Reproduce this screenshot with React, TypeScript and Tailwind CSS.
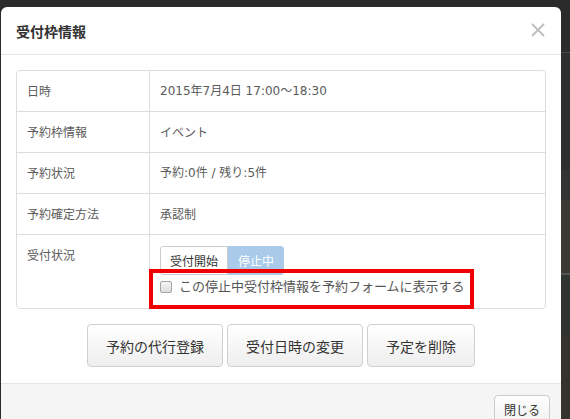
import React from "react";

function Row({ label, children, latin }: { label: string; children: React.ReactNode; latin?: boolean }) {
  return (
    <div className="flex border-t border-[#dddddd] first:border-t-0">
      <div className="w-[133px] shrink-0 border-r border-[#dddddd] px-[10px] py-[11px] text-[12px] leading-[18px] text-[#5a5a5a]">
        {label}
      </div>
      <div
        className={`flex-1 px-[10px] py-[11px] text-[12px] leading-[18px] text-[#5a5a5a] ${
          latin ? "font-['DejaVu_Sans','Noto_Sans_CJK_JP',sans-serif]" : ""
        }`}
      >
        {children}
      </div>
    </div>
  );
}

function ActionButton({ children }: { children: React.ReactNode }) {
  return (
    <button className="h-[43px] rounded-[4px] border border-[#d0d0d0] bg-gradient-to-b from-white to-[#eeeeee] px-[18px] text-[14px] leading-[20px] text-[#333]">
      {children}
    </button>
  );
}

export default function App() {
  return (
    <div className="flex h-[419px] w-[570px] overflow-hidden bg-[#2b2b2b] font-['Noto_Sans_CJK_JP','Noto_Sans',sans-serif]">
      <div className="w-[1px] shrink-0" />
      <div className="mt-[7px] flex w-[560px] shrink-0 flex-col self-start overflow-hidden rounded-[6px] bg-white">
        {/* header */}
        <div className="flex h-[48px] items-center justify-between border-b border-[#e5e5e5] pl-[15px] pr-[16px]">
          <div className="text-[14px] font-bold leading-[20px] text-[#333]">受付枠情報</div>
          <svg width="14" height="14" viewBox="0 0 14 14" className="mt-[-1px]">
            <path d="M1 1 L13 13 M13 1 L1 13" stroke="#bdbdbd" strokeWidth="1.8" />
          </svg>
        </div>
        {/* body */}
        <div className="flex flex-col px-[15px] pb-[16px] pt-[15px]">
          <div className="rounded-[4px] border border-[#dddddd]">
            <Row label="日時" latin>
              2015年7月4日 17:00～18:30
            </Row>
            <Row label="予約枠情報">イベント</Row>
            <Row label="予約状況" latin>
              予約:0件 / 残り:5件
            </Row>
            <Row label="予約確定方法">承認制</Row>
            <div className="flex border-t border-[#dddddd]">
              <div className="w-[133px] shrink-0 border-r border-[#dddddd] px-[10px] pt-[11px] text-[12px] leading-[18px] text-[#5a5a5a]">
                受付状況
              </div>
              <div className="flex flex-1 flex-col items-start px-[10px] pb-[12px] pt-[11px]">
                <div className="flex">
                  <div className="flex h-[29px] items-center rounded-l-[3px] border border-[#cccccc] bg-white px-[9px] text-[12px] leading-[18px] text-[#333]">
                    受付開始
                  </div>
                  <div className="flex h-[29px] items-center rounded-r-[3px] border border-[#a9cbe9] bg-[#a9cbe9] px-[9px] text-[12px] leading-[18px] text-white">
                    停止中
                  </div>
                </div>
                <div className="relative mt-[1px] flex h-[20px] items-center">
                  <span className="mt-[1px] h-[12px] w-[12px] rounded-[2px] border border-[#a5a5a5] bg-gradient-to-b from-[#f4f4f4] to-[#dedede]" />
                  <span className="ml-[7px] text-[13px] leading-[20px] text-[#555]">この停止中受付枠情報を予約フォームに表示する</span>
                  <div className="pointer-events-none absolute -bottom-[13px] -left-[11px] -right-[9px] -top-[7px] border-[4px] border-[#f00000]" />
                </div>
              </div>
            </div>
          </div>
          <div className="mt-[15px] flex justify-center gap-[4px]">
            <ActionButton>予約の代行登録</ActionButton>
            <ActionButton>受付日時の変更</ActionButton>
            <ActionButton>予定を削除</ActionButton>
          </div>
        </div>
        {/* footer */}
        <div className="flex h-[60px] justify-end border-t border-[#e5e5e5] bg-[#f5f5f5] pr-[11px] pt-[11px]">
          <button className="h-[30px] self-start rounded-[4px] border border-[#cccccc] bg-gradient-to-b from-white to-[#f0f0f0] px-[9px] text-[12px] leading-[18px] text-[#333]">
            閉じる
          </button>
        </div>
      </div>
      <div className="flex flex-1 flex-col">
        <div className="h-[52px] bg-[#2b2b2b]" />
        <div className="h-[1px] bg-[#4a4a4a]" />
        <div className="h-[117px] bg-[#2e2e2e]" />
        <div className="h-[30px] bg-[#333333]" />
        <div className="h-[73px] bg-[#3a3832]" />
        <div className="h-[2px] bg-[#555555]" />
        <div className="h-[60px] bg-[#2f3431]" />
        <div className="flex-1 bg-[#35332c]" />
      </div>
    </div>
  );
}
